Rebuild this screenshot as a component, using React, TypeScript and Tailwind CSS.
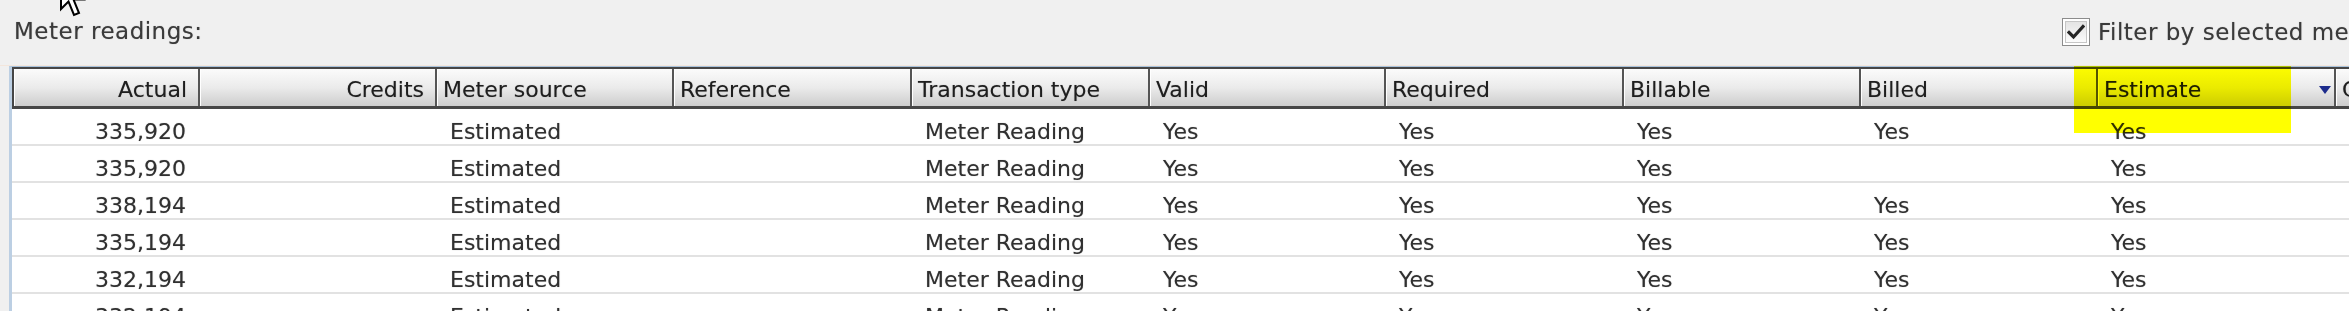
import React from "react";

type Col = {
  label: string;
  w: string;
  right?: boolean;
  sort?: boolean;
};

const columns: Col[] = [
  { label: "Actual", w: "w-[186px]", right: true },
  { label: "Credits", w: "w-[237px]", right: true },
  { label: "Meter source", w: "w-[237px]" },
  { label: "Reference", w: "w-[238px]" },
  { label: "Transaction type", w: "w-[238px]" },
  { label: "Valid", w: "w-[236px]" },
  { label: "Required", w: "w-[238px]" },
  { label: "Billable", w: "w-[237px]" },
  { label: "Billed", w: "w-[237px]" },
  { label: "Estimate", w: "w-[238px]", sort: true },
  { label: "Cost", w: "w-[120px]" },
];

const rows: string[][] = [
  ["335,920", "", "Estimated", "", "Meter Reading", "Yes", "Yes", "Yes", "Yes", "Yes", ""],
  ["335,920", "", "Estimated", "", "Meter Reading", "Yes", "Yes", "Yes", "", "Yes", ""],
  ["338,194", "", "Estimated", "", "Meter Reading", "Yes", "Yes", "Yes", "Yes", "Yes", ""],
  ["335,194", "", "Estimated", "", "Meter Reading", "Yes", "Yes", "Yes", "Yes", "Yes", ""],
  ["332,194", "", "Estimated", "", "Meter Reading", "Yes", "Yes", "Yes", "Yes", "Yes", ""],
  ["332,194", "", "Estimated", "", "Meter Reading", "Yes", "Yes", "Yes", "Yes", "Yes", ""],
];

const SortArrow = () => (
  <svg width="12" height="9" viewBox="0 0 12 9" className="shrink-0">
    <path d="M0 0 L12 0 L6 8 Z" fill="#1d2c8c" />
  </svg>
);

const Cursor = () => (
  <svg
    width="26"
    height="42"
    viewBox="0 0 26 42"
    className="absolute left-[60px] top-[-24px]"
  >
    <path
      d="M1 1 L1 33 L8.5 25.5 L14 39 L19 37 L13.5 23.5 L23.5 23.5 Z"
      fill="#ffffff"
      stroke="#000000"
      strokeWidth="2"
      strokeLinejoin="miter"
    />
  </svg>
);

const Checkbox = () => (
  <div className="w-[28px] h-[28px] shrink-0 border border-[#8c8c8c] bg-white p-[2px]">
    <div className="w-full h-full bg-linear-to-b from-[#e4e4e4] to-[#fbfbfb] border border-[#c6c6c6] flex items-center justify-center">
      <svg width="18" height="16" viewBox="0 0 18 16">
        <path
          d="M2 8.5 L6.5 13 L16 2.5"
          fill="none"
          stroke="#262626"
          strokeWidth="3.2"
          strokeLinecap="square"
        />
      </svg>
    </div>
  </div>
);

export default function App() {
  return (
    <div className="relative isolate w-[2349px] h-[311px] overflow-hidden bg-[#f0f0f0] font-['DejaVu_Sans',sans-serif] [text-shadow:0_0_1px_rgba(0,0,0,0.35)]">
      <Cursor />

      {/* Top bar */}
      <div className="h-[66px] flex items-start border-b border-b-[#f3e6dc]">
        <div className="pl-[14px] pt-[20px] text-[23px] leading-none tracking-[0.5px] text-[#3a3a3a] whitespace-nowrap">
          Meter readings:
        </div>
        <div className="ml-auto w-[287px] pt-[18px] flex items-center gap-[8px] overflow-hidden whitespace-nowrap">
          <Checkbox />
          <span className="text-[23px] leading-none tracking-[0.5px] text-[#3a3a3a]">
            Filter by selected meter
          </span>
        </div>
      </div>

      {/* Grid */}
      <div className="ml-[9px] border-l-[3px] border-l-[#bccfe3] border-t border-t-[#a9c3dc] bg-white">
        {/* Header */}
        <div className="flex h-[42px] border-t-2 border-b-[3px] border-l-2 border-[#464646] bg-linear-to-b from-[#fbfbfb] via-[#ebebeb] to-[#cdcdcd] text-[22px] leading-none text-[#1e1e1e] whitespace-nowrap">
          {columns.map((c) => (
            <div
              key={c.label}
              className={
                "shrink-0 h-full flex items-center pt-[5px] border-l border-l-white border-r-2 border-r-[#555555] " +
                c.w +
                (c.right ? " justify-end pr-[11px]" : c.sort ? " justify-between pl-[5px] pr-[3px]" : " pl-[5px]")
              }
            >
              <span>{c.label}</span>
              {c.sort && <SortArrow />}
            </div>
          ))}
        </div>

        {/* Rows */}
        {rows.map((r, i) => (
          <div
            key={i}
            className="flex h-[37px] border-b-2 border-b-[#e2e2e2] pl-[2px] text-[22px] leading-none text-[#303030] whitespace-nowrap"
          >
            {columns.map((c, j) => (
              <div
                key={c.label}
                className={
                  "shrink-0 h-full flex items-center pt-[11px] " +
                  c.w +
                  (c.right ? " justify-end pr-[14px]" : " pl-[13px]")
                }
              >
                {r[j]}
              </div>
            ))}
          </div>
        ))}
      </div>

      {/* Highlighter mark over the Estimate column */}
      <div className="absolute left-[2074px] top-[66px] w-[217px] h-[67px] bg-[#ffff00] mix-blend-multiply" />
    </div>
  );
}
